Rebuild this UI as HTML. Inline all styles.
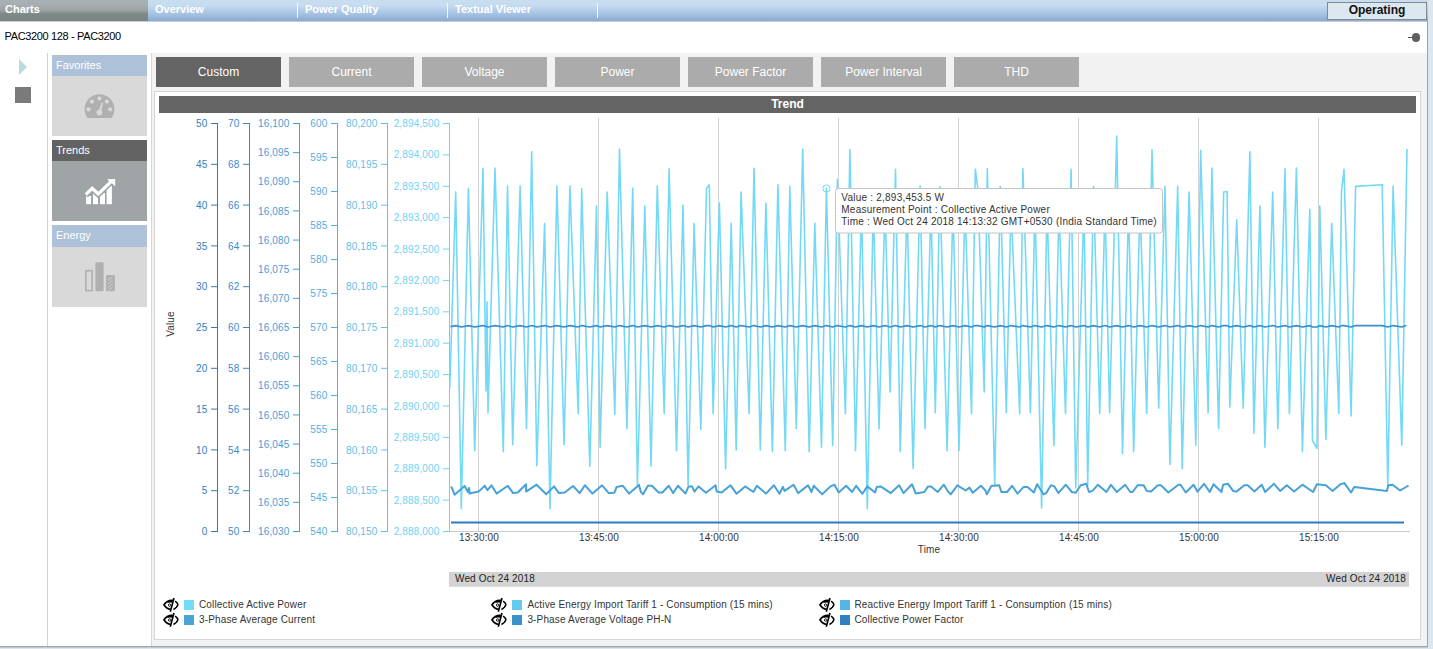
<!DOCTYPE html>
<html><head><meta charset="utf-8">
<style>
*{margin:0;padding:0;box-sizing:border-box}
html,body{width:1433px;height:649px;overflow:hidden;background:#dce6ef;font-family:"Liberation Sans",sans-serif}
.a{position:absolute}
#top{left:0;top:0;width:1428px;height:21px;background:linear-gradient(#c9ddf1 0,#c8dcf0 5px,#a9c6e5 13px,#89a9cf 21px)}
#charts{left:0;top:0;width:148px;height:21px;background:linear-gradient(#a8b2b5 0,#a6aeb1 5px,#9fa3a4 10px,#7d8a88 14px,#788583 21px)}
.tt{top:2px;color:#fff;font-weight:bold;font-size:11px;line-height:14px}
.sep{top:3px;width:1px;height:15px;background:#f4f8fc}
#oper{left:1327px;top:2px;width:100px;height:18px;background:#dce7f0;border:1px solid #7e8a96;font-weight:bold;font-size:12px;color:#111;text-align:center;line-height:15px}
#white{left:0;top:22px;width:1427px;height:624px;background:#fff}
#main{left:151px;top:53px;width:1277px;height:594px;background:#f2f2f2;border-left:1px solid #d6d6d6;border-right:1px solid #9ea3a8;border-bottom:1px solid #a0a4a8}
#nav{left:47px;top:53px;width:1px;height:593px;background:#d4d4d4}
.ph{left:52px;width:95px;height:20px;color:#fff;font-size:11px;line-height:20px;padding-left:4px}
.pb{left:52px;width:95px}
.tab{top:57px;width:125px;height:30px;background:#ababab;color:#fff;font-size:12px;line-height:30px;text-align:center}
#cbox{left:154px;top:91px;width:1267px;height:549px;background:#fff;border:1px solid #d6d6d6}
#trend{left:159px;top:96px;width:1257px;height:17px;background:#646464;color:#fff;font-weight:bold;font-size:12px;line-height:17px;text-align:center}
svg text{font-family:"Liberation Sans",sans-serif}
.ax{font-size:10px;letter-spacing:0.15px}
.tt2{font-size:10px;letter-spacing:0.225px}
</style></head><body>
<div class="a" id="top"></div>
<div class="a" style="left:0;top:21px;width:1427px;height:1px;background:#c8ccd0"></div>
<div class="a" id="charts"></div>
<div class="a tt" style="left:5px">Charts</div>
<div class="a tt" style="left:155px">Overview</div>
<div class="a sep" style="left:297px"></div>
<div class="a tt" style="left:305px">Power Quality</div>
<div class="a sep" style="left:447px"></div>
<div class="a tt" style="left:455px">Textual Viewer</div>
<div class="a sep" style="left:597px"></div>
<div class="a" id="oper">Operating</div>
<div class="a" id="white"></div>
<div class="a" style="left:1427px;top:21px;width:1px;height:626px;background:#a0a5aa"></div>
<div class="a" style="left:4.5px;top:30px;font-size:11px;color:#000;line-height:13px;letter-spacing:-0.35px">PAC3200 128 - PAC3200</div>
<!-- pin -->
<div class="a" style="left:1408px;top:37px;width:6px;height:1px;background:#555"></div>
<div class="a" style="left:1412px;top:33.4px;width:8.2px;height:8.2px;border-radius:50%;background:#5f5f5f"></div>
<div class="a" id="main"></div>
<div class="a" id="nav"></div>
<div class="a" style="left:0;top:646px;width:1428px;height:1px;background:#a0a4a8"></div>
<div class="a" style="left:0;top:647px;width:1428px;height:1px;background:#c3c8cd"></div>
<!-- nav icons -->
<div class="a" style="left:19px;top:59px;width:0;height:0;border-top:8px solid transparent;border-bottom:8px solid transparent;border-left:8px solid #bcd9e0"></div>
<div class="a" style="left:15px;top:87px;width:16px;height:16px;background:#7a7a7a"></div>
<!-- panels -->
<div class="a ph" style="top:55px;height:21px;background:#adc2d9">Favorites</div>
<div class="a pb" style="top:76px;height:60px;background:#d9d9d9"></div>
<div class="a ph" style="top:140px;height:21px;background:#636363">Trends</div>
<div class="a pb" style="top:161px;height:60px;background:#9fa4a6"></div>
<div class="a ph" style="top:225px;height:22px;background:#adc2d9">Energy</div>
<div class="a pb" style="top:247px;height:60px;background:#d9d9d9"></div>
<svg class="a" style="left:0;top:0" width="160" height="320">
<g fill="#b0b0b0">
<path d="M87.4 117.9 A14.9 14.9 0 1 1 111.6 117.9 Z"/>
</g>
<g fill="#d9d9d9">
<circle cx="99.4" cy="98.5" r="2.1"/><circle cx="91.9" cy="101.6" r="2.1"/><circle cx="106.9" cy="101.6" r="2.1"/>
<circle cx="88.6" cy="109.4" r="2.1"/><circle cx="110.2" cy="109.4" r="2.1"/><circle cx="99.4" cy="112.5" r="2.9"/>
<path d="M98.4 112 L101.6 102.5 L103.2 102.9 L100.6 112.5 Z"/>
</g>
<g fill="#fff">
<rect x="86.1" y="196" width="5" height="8.2"/><rect x="93" y="193" width="5" height="11.2"/>
<rect x="100" y="193" width="5" height="11.2"/><rect x="106.6" y="186" width="5.3" height="18.2"/>
</g>
<polyline points="85.5,195 92.2,188.3 98.3,194 112,180.5" fill="none" stroke="#9ea3a6" stroke-width="6.5" stroke-linejoin="miter"/>
<polyline points="85.8,194.6 92.2,188.3 98.3,194 111.5,181.2" fill="none" stroke="#fff" stroke-width="3.2" stroke-linejoin="miter"/>
<path d="M107 179.2 L115.2 178.9 L115.2 186.2 Z" fill="#fff"/>
<g fill="none" stroke="#b0b0b0">
<rect x="85.9" y="270.7" width="6.2" height="19.9" stroke-width="1.6"/>
</g>
<rect x="95.4" y="262.2" width="8.2" height="29.1" rx="0.8" fill="#b0b0b0"/>
<rect x="106.1" y="275.1" width="8.8" height="16.2" rx="0.8" fill="#b0b0b0"/>
<g stroke="#cfcfcf" stroke-width="1">
<line x1="108" y1="280.5" x2="112.5" y2="276.8"/><line x1="108" y1="284" x2="112.5" y2="280.3"/><line x1="108" y1="287.5" x2="112.5" y2="283.8"/><line x1="108.5" y1="290.5" x2="112.5" y2="287.3"/>
</g>
</svg>
<!-- tabs -->
<div class="a tab" style="left:156px;background:#646464">Custom</div>
<div class="a tab" style="left:289px">Current</div>
<div class="a tab" style="left:422px">Voltage</div>
<div class="a tab" style="left:555px">Power</div>
<div class="a tab" style="left:688px">Power Factor</div>
<div class="a tab" style="left:821px">Power Interval</div>
<div class="a tab" style="left:954px">THD</div>
<div class="a" id="cbox"></div>
<div class="a" id="trend">Trend</div>
<svg class="a" style="left:0;top:0" width="1433" height="649"><line x1="478.5" y1="118" x2="478.5" y2="531" stroke="#d3d3d3" stroke-width="1"/>
<line x1="598.5" y1="118" x2="598.5" y2="531" stroke="#d3d3d3" stroke-width="1"/>
<line x1="718.5" y1="118" x2="718.5" y2="531" stroke="#d3d3d3" stroke-width="1"/>
<line x1="838.5" y1="118" x2="838.5" y2="531" stroke="#d3d3d3" stroke-width="1"/>
<line x1="958.5" y1="118" x2="958.5" y2="531" stroke="#d3d3d3" stroke-width="1"/>
<line x1="1078.5" y1="118" x2="1078.5" y2="531" stroke="#d3d3d3" stroke-width="1"/>
<line x1="1198.5" y1="118" x2="1198.5" y2="531" stroke="#d3d3d3" stroke-width="1"/>
<line x1="1318.5" y1="118" x2="1318.5" y2="531" stroke="#d3d3d3" stroke-width="1"/>
<line x1="449" y1="531.5" x2="1410" y2="531.5" stroke="#cccccc" stroke-width="1"/>
<line x1="217.5" y1="123.5" x2="217.5" y2="532.0" stroke="#2d7dc0" stroke-width="1"/>
<line x1="211.0" y1="531.50" x2="218.0" y2="531.50" stroke="#2d7dc0" stroke-width="1"/>
<text x="207.5" y="535.10" fill="#2d7dc0" text-anchor="end" class="ax">0</text>
<line x1="211.0" y1="490.70" x2="218.0" y2="490.70" stroke="#2d7dc0" stroke-width="1"/>
<text x="207.5" y="494.30" fill="#2d7dc0" text-anchor="end" class="ax">5</text>
<line x1="211.0" y1="449.90" x2="218.0" y2="449.90" stroke="#2d7dc0" stroke-width="1"/>
<text x="207.5" y="453.50" fill="#2d7dc0" text-anchor="end" class="ax">10</text>
<line x1="211.0" y1="409.10" x2="218.0" y2="409.10" stroke="#2d7dc0" stroke-width="1"/>
<text x="207.5" y="412.70" fill="#2d7dc0" text-anchor="end" class="ax">15</text>
<line x1="211.0" y1="368.30" x2="218.0" y2="368.30" stroke="#2d7dc0" stroke-width="1"/>
<text x="207.5" y="371.90" fill="#2d7dc0" text-anchor="end" class="ax">20</text>
<line x1="211.0" y1="327.50" x2="218.0" y2="327.50" stroke="#2d7dc0" stroke-width="1"/>
<text x="207.5" y="331.10" fill="#2d7dc0" text-anchor="end" class="ax">25</text>
<line x1="211.0" y1="286.70" x2="218.0" y2="286.70" stroke="#2d7dc0" stroke-width="1"/>
<text x="207.5" y="290.30" fill="#2d7dc0" text-anchor="end" class="ax">30</text>
<line x1="211.0" y1="245.90" x2="218.0" y2="245.90" stroke="#2d7dc0" stroke-width="1"/>
<text x="207.5" y="249.50" fill="#2d7dc0" text-anchor="end" class="ax">35</text>
<line x1="211.0" y1="205.10" x2="218.0" y2="205.10" stroke="#2d7dc0" stroke-width="1"/>
<text x="207.5" y="208.70" fill="#2d7dc0" text-anchor="end" class="ax">40</text>
<line x1="211.0" y1="164.30" x2="218.0" y2="164.30" stroke="#2d7dc0" stroke-width="1"/>
<text x="207.5" y="167.90" fill="#2d7dc0" text-anchor="end" class="ax">45</text>
<line x1="211.0" y1="123.50" x2="218.0" y2="123.50" stroke="#2d7dc0" stroke-width="1"/>
<text x="207.5" y="127.10" fill="#2d7dc0" text-anchor="end" class="ax">50</text>
<line x1="249.5" y1="123.5" x2="249.5" y2="532.0" stroke="#3a8bcb" stroke-width="1"/>
<line x1="243.0" y1="531.50" x2="250.0" y2="531.50" stroke="#3a8bcb" stroke-width="1"/>
<text x="239.5" y="535.10" fill="#3a8bcb" text-anchor="end" class="ax">50</text>
<line x1="243.0" y1="490.70" x2="250.0" y2="490.70" stroke="#3a8bcb" stroke-width="1"/>
<text x="239.5" y="494.30" fill="#3a8bcb" text-anchor="end" class="ax">52</text>
<line x1="243.0" y1="449.90" x2="250.0" y2="449.90" stroke="#3a8bcb" stroke-width="1"/>
<text x="239.5" y="453.50" fill="#3a8bcb" text-anchor="end" class="ax">54</text>
<line x1="243.0" y1="409.10" x2="250.0" y2="409.10" stroke="#3a8bcb" stroke-width="1"/>
<text x="239.5" y="412.70" fill="#3a8bcb" text-anchor="end" class="ax">56</text>
<line x1="243.0" y1="368.30" x2="250.0" y2="368.30" stroke="#3a8bcb" stroke-width="1"/>
<text x="239.5" y="371.90" fill="#3a8bcb" text-anchor="end" class="ax">58</text>
<line x1="243.0" y1="327.50" x2="250.0" y2="327.50" stroke="#3a8bcb" stroke-width="1"/>
<text x="239.5" y="331.10" fill="#3a8bcb" text-anchor="end" class="ax">60</text>
<line x1="243.0" y1="286.70" x2="250.0" y2="286.70" stroke="#3a8bcb" stroke-width="1"/>
<text x="239.5" y="290.30" fill="#3a8bcb" text-anchor="end" class="ax">62</text>
<line x1="243.0" y1="245.90" x2="250.0" y2="245.90" stroke="#3a8bcb" stroke-width="1"/>
<text x="239.5" y="249.50" fill="#3a8bcb" text-anchor="end" class="ax">64</text>
<line x1="243.0" y1="205.10" x2="250.0" y2="205.10" stroke="#3a8bcb" stroke-width="1"/>
<text x="239.5" y="208.70" fill="#3a8bcb" text-anchor="end" class="ax">66</text>
<line x1="243.0" y1="164.30" x2="250.0" y2="164.30" stroke="#3a8bcb" stroke-width="1"/>
<text x="239.5" y="167.90" fill="#3a8bcb" text-anchor="end" class="ax">68</text>
<line x1="243.0" y1="123.50" x2="250.0" y2="123.50" stroke="#3a8bcb" stroke-width="1"/>
<text x="239.5" y="127.10" fill="#3a8bcb" text-anchor="end" class="ax">70</text>
<line x1="299.5" y1="123.5" x2="299.5" y2="532.0" stroke="#4a9cd5" stroke-width="1"/>
<line x1="293.0" y1="531.50" x2="300.0" y2="531.50" stroke="#4a9cd5" stroke-width="1"/>
<text x="289.5" y="535.10" fill="#4a9cd5" text-anchor="end" class="ax">16,030</text>
<line x1="293.0" y1="502.36" x2="300.0" y2="502.36" stroke="#4a9cd5" stroke-width="1"/>
<text x="289.5" y="505.96" fill="#4a9cd5" text-anchor="end" class="ax">16,035</text>
<line x1="293.0" y1="473.21" x2="300.0" y2="473.21" stroke="#4a9cd5" stroke-width="1"/>
<text x="289.5" y="476.81" fill="#4a9cd5" text-anchor="end" class="ax">16,040</text>
<line x1="293.0" y1="444.07" x2="300.0" y2="444.07" stroke="#4a9cd5" stroke-width="1"/>
<text x="289.5" y="447.67" fill="#4a9cd5" text-anchor="end" class="ax">16,045</text>
<line x1="293.0" y1="414.93" x2="300.0" y2="414.93" stroke="#4a9cd5" stroke-width="1"/>
<text x="289.5" y="418.53" fill="#4a9cd5" text-anchor="end" class="ax">16,050</text>
<line x1="293.0" y1="385.79" x2="300.0" y2="385.79" stroke="#4a9cd5" stroke-width="1"/>
<text x="289.5" y="389.39" fill="#4a9cd5" text-anchor="end" class="ax">16,055</text>
<line x1="293.0" y1="356.64" x2="300.0" y2="356.64" stroke="#4a9cd5" stroke-width="1"/>
<text x="289.5" y="360.24" fill="#4a9cd5" text-anchor="end" class="ax">16,060</text>
<line x1="293.0" y1="327.50" x2="300.0" y2="327.50" stroke="#4a9cd5" stroke-width="1"/>
<text x="289.5" y="331.10" fill="#4a9cd5" text-anchor="end" class="ax">16,065</text>
<line x1="293.0" y1="298.36" x2="300.0" y2="298.36" stroke="#4a9cd5" stroke-width="1"/>
<text x="289.5" y="301.96" fill="#4a9cd5" text-anchor="end" class="ax">16,070</text>
<line x1="293.0" y1="269.21" x2="300.0" y2="269.21" stroke="#4a9cd5" stroke-width="1"/>
<text x="289.5" y="272.81" fill="#4a9cd5" text-anchor="end" class="ax">16,075</text>
<line x1="293.0" y1="240.07" x2="300.0" y2="240.07" stroke="#4a9cd5" stroke-width="1"/>
<text x="289.5" y="243.67" fill="#4a9cd5" text-anchor="end" class="ax">16,080</text>
<line x1="293.0" y1="210.93" x2="300.0" y2="210.93" stroke="#4a9cd5" stroke-width="1"/>
<text x="289.5" y="214.53" fill="#4a9cd5" text-anchor="end" class="ax">16,085</text>
<line x1="293.0" y1="181.79" x2="300.0" y2="181.79" stroke="#4a9cd5" stroke-width="1"/>
<text x="289.5" y="185.39" fill="#4a9cd5" text-anchor="end" class="ax">16,090</text>
<line x1="293.0" y1="152.64" x2="300.0" y2="152.64" stroke="#4a9cd5" stroke-width="1"/>
<text x="289.5" y="156.24" fill="#4a9cd5" text-anchor="end" class="ax">16,095</text>
<line x1="293.0" y1="123.50" x2="300.0" y2="123.50" stroke="#4a9cd5" stroke-width="1"/>
<text x="289.5" y="127.10" fill="#4a9cd5" text-anchor="end" class="ax">16,100</text>
<line x1="337.5" y1="123.5" x2="337.5" y2="532.0" stroke="#53aedf" stroke-width="1"/>
<line x1="331.0" y1="531.50" x2="338.0" y2="531.50" stroke="#53aedf" stroke-width="1"/>
<text x="327.5" y="535.10" fill="#53aedf" text-anchor="end" class="ax">540</text>
<line x1="331.0" y1="497.50" x2="338.0" y2="497.50" stroke="#53aedf" stroke-width="1"/>
<text x="327.5" y="501.10" fill="#53aedf" text-anchor="end" class="ax">545</text>
<line x1="331.0" y1="463.50" x2="338.0" y2="463.50" stroke="#53aedf" stroke-width="1"/>
<text x="327.5" y="467.10" fill="#53aedf" text-anchor="end" class="ax">550</text>
<line x1="331.0" y1="429.50" x2="338.0" y2="429.50" stroke="#53aedf" stroke-width="1"/>
<text x="327.5" y="433.10" fill="#53aedf" text-anchor="end" class="ax">555</text>
<line x1="331.0" y1="395.50" x2="338.0" y2="395.50" stroke="#53aedf" stroke-width="1"/>
<text x="327.5" y="399.10" fill="#53aedf" text-anchor="end" class="ax">560</text>
<line x1="331.0" y1="361.50" x2="338.0" y2="361.50" stroke="#53aedf" stroke-width="1"/>
<text x="327.5" y="365.10" fill="#53aedf" text-anchor="end" class="ax">565</text>
<line x1="331.0" y1="327.50" x2="338.0" y2="327.50" stroke="#53aedf" stroke-width="1"/>
<text x="327.5" y="331.10" fill="#53aedf" text-anchor="end" class="ax">570</text>
<line x1="331.0" y1="293.50" x2="338.0" y2="293.50" stroke="#53aedf" stroke-width="1"/>
<text x="327.5" y="297.10" fill="#53aedf" text-anchor="end" class="ax">575</text>
<line x1="331.0" y1="259.50" x2="338.0" y2="259.50" stroke="#53aedf" stroke-width="1"/>
<text x="327.5" y="263.10" fill="#53aedf" text-anchor="end" class="ax">580</text>
<line x1="331.0" y1="225.50" x2="338.0" y2="225.50" stroke="#53aedf" stroke-width="1"/>
<text x="327.5" y="229.10" fill="#53aedf" text-anchor="end" class="ax">585</text>
<line x1="331.0" y1="191.50" x2="338.0" y2="191.50" stroke="#53aedf" stroke-width="1"/>
<text x="327.5" y="195.10" fill="#53aedf" text-anchor="end" class="ax">590</text>
<line x1="331.0" y1="157.50" x2="338.0" y2="157.50" stroke="#53aedf" stroke-width="1"/>
<text x="327.5" y="161.10" fill="#53aedf" text-anchor="end" class="ax">595</text>
<line x1="331.0" y1="123.50" x2="338.0" y2="123.50" stroke="#53aedf" stroke-width="1"/>
<text x="327.5" y="127.10" fill="#53aedf" text-anchor="end" class="ax">600</text>
<line x1="387.5" y1="123.5" x2="387.5" y2="532.0" stroke="#5fc0ea" stroke-width="1"/>
<line x1="381.0" y1="531.50" x2="388.0" y2="531.50" stroke="#5fc0ea" stroke-width="1"/>
<text x="377.5" y="535.10" fill="#5fc0ea" text-anchor="end" class="ax">80,150</text>
<line x1="381.0" y1="490.70" x2="388.0" y2="490.70" stroke="#5fc0ea" stroke-width="1"/>
<text x="377.5" y="494.30" fill="#5fc0ea" text-anchor="end" class="ax">80,155</text>
<line x1="381.0" y1="449.90" x2="388.0" y2="449.90" stroke="#5fc0ea" stroke-width="1"/>
<text x="377.5" y="453.50" fill="#5fc0ea" text-anchor="end" class="ax">80,160</text>
<line x1="381.0" y1="409.10" x2="388.0" y2="409.10" stroke="#5fc0ea" stroke-width="1"/>
<text x="377.5" y="412.70" fill="#5fc0ea" text-anchor="end" class="ax">80,165</text>
<line x1="381.0" y1="368.30" x2="388.0" y2="368.30" stroke="#5fc0ea" stroke-width="1"/>
<text x="377.5" y="371.90" fill="#5fc0ea" text-anchor="end" class="ax">80,170</text>
<line x1="381.0" y1="327.50" x2="388.0" y2="327.50" stroke="#5fc0ea" stroke-width="1"/>
<text x="377.5" y="331.10" fill="#5fc0ea" text-anchor="end" class="ax">80,175</text>
<line x1="381.0" y1="286.70" x2="388.0" y2="286.70" stroke="#5fc0ea" stroke-width="1"/>
<text x="377.5" y="290.30" fill="#5fc0ea" text-anchor="end" class="ax">80,180</text>
<line x1="381.0" y1="245.90" x2="388.0" y2="245.90" stroke="#5fc0ea" stroke-width="1"/>
<text x="377.5" y="249.50" fill="#5fc0ea" text-anchor="end" class="ax">80,185</text>
<line x1="381.0" y1="205.10" x2="388.0" y2="205.10" stroke="#5fc0ea" stroke-width="1"/>
<text x="377.5" y="208.70" fill="#5fc0ea" text-anchor="end" class="ax">80,190</text>
<line x1="381.0" y1="164.30" x2="388.0" y2="164.30" stroke="#5fc0ea" stroke-width="1"/>
<text x="377.5" y="167.90" fill="#5fc0ea" text-anchor="end" class="ax">80,195</text>
<line x1="381.0" y1="123.50" x2="388.0" y2="123.50" stroke="#5fc0ea" stroke-width="1"/>
<text x="377.5" y="127.10" fill="#5fc0ea" text-anchor="end" class="ax">80,200</text>
<line x1="449.5" y1="123.5" x2="449.5" y2="532.0" stroke="#6dd3f5" stroke-width="1"/>
<line x1="443.0" y1="531.50" x2="450.0" y2="531.50" stroke="#6dd3f5" stroke-width="1"/>
<text x="439.5" y="535.10" fill="#6dd3f5" text-anchor="end" class="ax">2,888,000</text>
<line x1="443.0" y1="500.12" x2="450.0" y2="500.12" stroke="#6dd3f5" stroke-width="1"/>
<text x="439.5" y="503.72" fill="#6dd3f5" text-anchor="end" class="ax">2,888,500</text>
<line x1="443.0" y1="468.73" x2="450.0" y2="468.73" stroke="#6dd3f5" stroke-width="1"/>
<text x="439.5" y="472.33" fill="#6dd3f5" text-anchor="end" class="ax">2,889,000</text>
<line x1="443.0" y1="437.35" x2="450.0" y2="437.35" stroke="#6dd3f5" stroke-width="1"/>
<text x="439.5" y="440.95" fill="#6dd3f5" text-anchor="end" class="ax">2,889,500</text>
<line x1="443.0" y1="405.96" x2="450.0" y2="405.96" stroke="#6dd3f5" stroke-width="1"/>
<text x="439.5" y="409.56" fill="#6dd3f5" text-anchor="end" class="ax">2,890,000</text>
<line x1="443.0" y1="374.58" x2="450.0" y2="374.58" stroke="#6dd3f5" stroke-width="1"/>
<text x="439.5" y="378.18" fill="#6dd3f5" text-anchor="end" class="ax">2,890,500</text>
<line x1="443.0" y1="343.19" x2="450.0" y2="343.19" stroke="#6dd3f5" stroke-width="1"/>
<text x="439.5" y="346.79" fill="#6dd3f5" text-anchor="end" class="ax">2,891,000</text>
<line x1="443.0" y1="311.81" x2="450.0" y2="311.81" stroke="#6dd3f5" stroke-width="1"/>
<text x="439.5" y="315.41" fill="#6dd3f5" text-anchor="end" class="ax">2,891,500</text>
<line x1="443.0" y1="280.42" x2="450.0" y2="280.42" stroke="#6dd3f5" stroke-width="1"/>
<text x="439.5" y="284.02" fill="#6dd3f5" text-anchor="end" class="ax">2,892,000</text>
<line x1="443.0" y1="249.04" x2="450.0" y2="249.04" stroke="#6dd3f5" stroke-width="1"/>
<text x="439.5" y="252.64" fill="#6dd3f5" text-anchor="end" class="ax">2,892,500</text>
<line x1="443.0" y1="217.65" x2="450.0" y2="217.65" stroke="#6dd3f5" stroke-width="1"/>
<text x="439.5" y="221.25" fill="#6dd3f5" text-anchor="end" class="ax">2,893,000</text>
<line x1="443.0" y1="186.27" x2="450.0" y2="186.27" stroke="#6dd3f5" stroke-width="1"/>
<text x="439.5" y="189.87" fill="#6dd3f5" text-anchor="end" class="ax">2,893,500</text>
<line x1="443.0" y1="154.88" x2="450.0" y2="154.88" stroke="#6dd3f5" stroke-width="1"/>
<text x="439.5" y="158.48" fill="#6dd3f5" text-anchor="end" class="ax">2,894,000</text>
<line x1="443.0" y1="123.50" x2="450.0" y2="123.50" stroke="#6dd3f5" stroke-width="1"/>
<text x="439.5" y="127.10" fill="#6dd3f5" text-anchor="end" class="ax">2,894,500</text>
<text x="479" y="541" fill="#333" text-anchor="middle" class="ax">13:30:00</text>
<text x="599" y="541" fill="#333" text-anchor="middle" class="ax">13:45:00</text>
<text x="719" y="541" fill="#333" text-anchor="middle" class="ax">14:00:00</text>
<text x="839" y="541" fill="#333" text-anchor="middle" class="ax">14:15:00</text>
<text x="959" y="541" fill="#333" text-anchor="middle" class="ax">14:30:00</text>
<text x="1079" y="541" fill="#333" text-anchor="middle" class="ax">14:45:00</text>
<text x="1199" y="541" fill="#333" text-anchor="middle" class="ax">15:00:00</text>
<text x="1319" y="541" fill="#333" text-anchor="middle" class="ax">15:15:00</text>
<text x="929" y="553" fill="#333" text-anchor="middle" class="ax">Time</text>
<text transform="translate(174,324) rotate(-90)" fill="#333" text-anchor="middle" class="ax">Value</text>
<polyline points="449.8,388.0 455.7,192.0 461.3,508.8 468.4,188.4 474.7,450.7 483.0,168.3 486.0,391.0 487.0,302.0 488.0,412.7 495.0,168.0 503.3,451.8 507.5,186.1 512.7,444.7 520.1,186.1 526.5,428.8 531.7,151.7 536.8,465.7 544.6,223.5 550.0,508.8 556.9,186.1 564.1,444.7 569.9,186.1 578.2,413.8 581.7,188.6 589.8,466.3 596.5,206.0 600.1,447.3 607.2,192.0 614.8,414.3 619.5,149.1 626.9,428.8 632.7,188.2 637.4,485.3 644.8,206.0 651.0,466.3 657.3,186.1 664.2,413.4 669.1,168.9 676.5,450.7 683.0,205.4 688.1,485.3 694.1,223.2 700.8,429.5 706.5,188.2 709.3,184.8 713.1,413.4 719.4,203.1 725.6,469.0 731.2,223.2 736.2,450.0 741.1,192.0 749.1,413.4 754.0,168.3 760.3,450.0 765.9,203.1 772.4,451.8 777.9,184.8 785.3,450.7 789.8,186.4 796.3,428.8 802.7,149.1 809.2,451.8 814.8,223.2 821.5,447.3 826.4,188.2 832.7,445.5 837.4,179.2 845.4,413.8 849.9,149.5 855.5,450.7 861.5,205.0 867.3,508.8 873.3,205.0 879.0,428.8 885.0,205.0 890.1,391.9 895.5,169.2 900.2,451.8 907.0,205.0 913.1,468.6 920.1,185.9 925.0,428.8 931.0,205.0 935.3,412.7 939.9,186.6 947.1,450.7 953.0,205.0 959.0,450.7 965.0,205.0 971.5,413.8 975.3,169.2 977.9,189.0 984.2,391.9 987.3,168.6 994.7,485.3 1000.3,186.4 1006.3,412.7 1011.0,205.0 1019.7,413.8 1022.9,168.5 1030.4,412.7 1035.0,205.0 1041.6,508.1 1047.0,205.0 1053.9,445.5 1059.0,205.0 1065.5,413.8 1071.1,169.2 1075.7,487.8 1084.0,205.0 1087.7,485.0 1093.5,186.4 1099.7,413.4 1105.0,205.0 1109.6,412.7 1116.7,136.1 1122.5,453.4 1128.6,205.0 1133.7,451.8 1140.0,205.0 1146.7,413.4 1152.0,149.5 1158.7,408.2 1165.0,186.4 1169.9,464.5 1177.7,186.4 1182.2,468.6 1189.1,192.0 1195.8,445.1 1200.7,150.2 1208.1,412.7 1211.9,168.0 1218.6,428.8 1223.7,192.0 1227.1,191.5 1229.8,407.1 1236.7,219.9 1243.2,408.2 1249.9,151.7 1253.9,433.3 1259.9,206.0 1264.9,447.3 1272.7,192.0 1277.8,428.8 1285.0,168.7 1289.4,413.4 1296.4,168.0 1302.4,451.8 1309.8,209.4 1312.5,440.6 1317.0,448.5 1319.8,206.0 1325.9,439.5 1331.7,223.2 1338.8,413.4 1341.5,191.5 1344.0,169.2 1351.1,416.0 1355.6,186.4 1382.2,184.8 1387.8,486.4 1393.1,186.4 1401.8,445.5 1407.0,149.0" fill="none" stroke="#74d9f7" stroke-width="1.6" stroke-linejoin="round"/>
<polyline points="450.5,326.6 455.7,325.6 461.3,327.0 468.4,325.6 474.7,327.0 483.0,325.6 488.0,327.0 495.0,325.6 503.3,327.0 507.5,325.6 512.7,327.0 520.1,325.6 526.5,327.0 531.7,325.6 536.8,327.0 544.6,325.6 550.0,327.0 556.9,325.6 564.1,327.0 569.9,325.6 578.2,327.0 581.7,325.6 589.8,327.0 596.5,325.6 600.1,327.0 607.2,325.6 614.8,327.0 619.5,325.6 626.9,327.0 632.7,325.6 637.4,327.0 644.8,325.6 651.0,327.0 657.3,325.6 664.2,327.0 669.1,325.6 676.5,327.0 683.0,325.6 688.1,327.0 694.1,325.6 700.8,327.0 706.5,325.6 709.3,325.6 713.1,327.0 719.4,325.6 725.6,327.0 731.2,325.6 736.2,327.0 741.1,325.6 749.1,327.0 754.0,325.6 760.3,327.0 765.9,325.6 772.4,327.0 777.9,325.6 785.3,327.0 789.8,325.6 796.3,327.0 802.7,325.6 809.2,327.0 814.8,325.6 821.5,327.0 826.4,325.6 832.7,327.0 837.4,325.6 845.4,327.0 849.9,325.6 855.5,327.0 861.5,325.6 867.3,327.0 873.3,325.6 879.0,327.0 885.0,325.6 890.1,327.0 895.5,325.6 900.2,327.0 907.0,325.6 913.1,327.0 920.1,325.6 925.0,327.0 931.0,325.6 935.3,327.0 939.9,325.6 947.1,327.0 953.0,325.6 959.0,327.0 965.0,325.6 971.5,327.0 975.3,325.6 977.9,325.6 984.2,327.0 987.3,325.6 994.7,327.0 1000.3,325.6 1006.3,327.0 1011.0,325.6 1019.7,327.0 1022.9,325.6 1030.4,327.0 1035.0,325.6 1041.6,327.0 1047.0,325.6 1053.9,327.0 1059.0,325.6 1065.5,327.0 1071.1,325.6 1075.7,327.0 1084.0,325.6 1087.7,327.0 1093.5,325.6 1099.7,327.0 1105.0,325.6 1109.6,327.0 1116.7,325.6 1122.5,327.0 1128.6,325.6 1133.7,327.0 1140.0,325.6 1146.7,327.0 1152.0,325.6 1158.7,327.0 1165.0,325.6 1169.9,327.0 1177.7,325.6 1182.2,327.0 1189.1,325.6 1195.8,327.0 1200.7,325.6 1208.1,327.0 1211.9,325.6 1218.6,327.0 1223.7,325.6 1227.1,325.6 1229.8,327.0 1236.7,325.6 1243.2,327.0 1249.9,325.6 1253.9,327.0 1259.9,325.6 1264.9,327.0 1272.7,325.6 1277.8,327.0 1285.0,325.6 1289.4,327.0 1296.4,325.6 1302.4,327.0 1309.8,325.6 1312.5,327.0 1317.0,327.0 1319.8,325.6 1325.9,327.0 1331.7,325.6 1338.8,327.0 1341.5,325.6 1344.0,325.6 1351.1,327.0 1355.6,325.6 1382.2,325.6 1387.8,327.0 1393.1,325.6 1401.8,327.0 1406.3,325.6" fill="none" stroke="#3d8dca" stroke-width="1.6" stroke-linejoin="round"/>
<polyline points="451.2,486.4 454.6,494.7 464.6,486.0 468.0,492.0 469.1,488.0 469.6,493.6 478.7,491.6 484.8,485.8 487.4,490.2 491.5,485.3 496.6,493.6 507.8,485.8 513.1,493.1 517.8,492.5 526.1,484.2 526.1,491.6 536.6,484.7 546.2,494.3 554.0,486.4 559.0,493.1 564.8,492.5 573.0,486.0 579.7,493.1 584.9,485.3 592.5,493.6 602.1,485.3 608.8,493.1 614.4,492.7 616.6,486.9 622.9,485.8 629.1,493.6 639.0,484.9 640.7,491.6 643.0,494.3 647.9,485.8 651.9,485.8 658.6,492.5 662.4,492.5 668.7,485.8 673.1,493.1 678.0,485.8 685.4,493.6 688.6,486.4 692.1,486.4 694.4,491.6 698.6,486.4 706.0,492.7 715.6,485.3 716.7,491.6 721.6,492.5 730.6,485.3 736.6,493.8 745.1,486.4 753.4,492.0 756.9,485.8 765.9,493.6 773.9,485.3 779.5,493.8 782.9,486.9 784.6,490.9 793.6,484.7 798.1,493.1 808.1,485.3 811.5,492.0 813.7,485.8 822.2,494.3 830.5,486.4 834.5,484.7 838.7,492.5 846.1,485.8 852.1,492.0 856.2,485.8 862.4,493.8 867.3,486.4 875.1,492.5 876.7,486.9 880.7,486.4 890.8,493.1 899.1,485.3 903.5,493.1 912.0,484.2 915.8,493.6 924.3,492.0 928.1,486.4 931.0,486.4 937.7,492.0 943.8,484.7 948.4,492.0 950.7,494.3 957.4,485.3 965.6,490.5 969.4,487.6 972.8,492.7 980.8,485.8 985.3,490.2 986.9,494.3 991.3,486.0 999.2,485.3 1001.4,492.0 1007.0,492.0 1012.1,485.8 1017.5,493.6 1023.7,486.9 1027.5,486.9 1033.8,492.5 1037.2,484.2 1043.4,494.3 1046.1,493.1 1051.0,485.3 1054.4,486.4 1058.4,493.1 1065.8,484.7 1071.8,492.0 1075.8,492.7 1080.7,485.3 1086.3,483.8 1089.0,492.0 1092.4,490.9 1097.9,484.7 1106.4,492.0 1110.9,484.9 1116.9,492.0 1125.2,484.7 1130.3,492.0 1132.6,492.0 1137.5,485.3 1143.7,485.3 1146.7,490.9 1151.1,491.6 1157.8,485.3 1161.0,485.3 1168.3,492.5 1178.4,484.7 1180.6,484.7 1185.8,492.5 1193.6,484.7 1197.4,491.6 1204.1,483.8 1209.7,492.0 1213.5,484.2 1221.5,492.0 1223.1,484.7 1228.0,483.8 1233.1,490.9 1236.5,491.6 1244.3,485.3 1247.7,485.3 1254.4,491.4 1261.7,484.7 1265.1,492.0 1274.0,483.8 1280.1,490.9 1286.8,485.3 1294.1,491.6 1302.4,484.7 1313.1,492.0 1316.9,484.2 1325.9,485.3 1332.6,490.9 1340.4,484.2 1344.4,483.1 1351.1,492.5 1354.2,486.9 1386.9,490.9 1388.4,485.3 1392.5,484.7 1400.1,490.5 1408.6,485.5" fill="none" stroke="#48a2d8" stroke-width="2" stroke-linejoin="round"/>
<line x1="451" y1="522.5" x2="1404" y2="522.5" stroke="#2d7dc0" stroke-width="2"/>
<circle cx="826.4" cy="188.5" r="3.6" fill="none" stroke="#74d9f7" stroke-width="1"/>
<rect x="835.5" y="188.5" width="327" height="44.5" rx="3" ry="3" fill="#fff" stroke="#c4c4c4" stroke-width="1"/>
<text x="841.3" y="201" fill="#333" class="tt2">Value : 2,893,453.5 W</text>
<text x="841.3" y="213" fill="#333" class="tt2">Measurement Point : Collective Active Power</text>
<text x="841.3" y="225" fill="#333" class="tt2">Time : Wed Oct 24 2018 14:13:32 GMT+0530 (India Standard Time)</text>
<rect x="449" y="572" width="960" height="14.8" fill="#d3d3d3"/>
<text x="455" y="582.4" fill="#222" class="ax">Wed Oct 24 2018</text>
<text x="1406" y="582.4" fill="#222" text-anchor="end" class="ax">Wed Oct 24 2018</text>
<g transform="translate(161,596)"><path d="M11.8 4.4 C8.0 4.0 4.8 6.0 3.0 8.8 C4.6 11.4 7.0 13.1 9.6 13.5" stroke="#000" stroke-width="1.7" fill="none"/><path d="M6.2 5.4 C7.7 4.6 9.6 4.2 12.0 4.3 L11.4 6.9 C9.9 6.2 7.9 6.3 6.6 7.0 Z" fill="#000"/><circle cx="8.6" cy="9.1" r="1.2" stroke="#000" stroke-width="0.9" fill="none"/><path d="M13.0 2.0 L9.3 15.8" stroke="#000" stroke-width="1.6"/><path d="M14.2 5.2 C15.6 6.3 16.9 7.8 16.9 8.7 C16.6 10.3 15.0 12.0 12.5 13.5" stroke="#000" stroke-width="1.5" fill="none"/></g>
<rect x="184" y="600" width="10" height="10" fill="#72dcf8"/>
<text x="199" y="608" fill="#333" class="ax">Collective Active Power</text>
<g transform="translate(161,611)"><path d="M11.8 4.4 C8.0 4.0 4.8 6.0 3.0 8.8 C4.6 11.4 7.0 13.1 9.6 13.5" stroke="#000" stroke-width="1.7" fill="none"/><path d="M6.2 5.4 C7.7 4.6 9.6 4.2 12.0 4.3 L11.4 6.9 C9.9 6.2 7.9 6.3 6.6 7.0 Z" fill="#000"/><circle cx="8.6" cy="9.1" r="1.2" stroke="#000" stroke-width="0.9" fill="none"/><path d="M13.0 2.0 L9.3 15.8" stroke="#000" stroke-width="1.6"/><path d="M14.2 5.2 C15.6 6.3 16.9 7.8 16.9 8.7 C16.6 10.3 15.0 12.0 12.5 13.5" stroke="#000" stroke-width="1.5" fill="none"/></g>
<rect x="184" y="615" width="10" height="10" fill="#4aa3d5"/>
<text x="199" y="623" fill="#333" class="ax">3-Phase Average Current</text>
<g transform="translate(489,596)"><path d="M11.8 4.4 C8.0 4.0 4.8 6.0 3.0 8.8 C4.6 11.4 7.0 13.1 9.6 13.5" stroke="#000" stroke-width="1.7" fill="none"/><path d="M6.2 5.4 C7.7 4.6 9.6 4.2 12.0 4.3 L11.4 6.9 C9.9 6.2 7.9 6.3 6.6 7.0 Z" fill="#000"/><circle cx="8.6" cy="9.1" r="1.2" stroke="#000" stroke-width="0.9" fill="none"/><path d="M13.0 2.0 L9.3 15.8" stroke="#000" stroke-width="1.6"/><path d="M14.2 5.2 C15.6 6.3 16.9 7.8 16.9 8.7 C16.6 10.3 15.0 12.0 12.5 13.5" stroke="#000" stroke-width="1.5" fill="none"/></g>
<rect x="512" y="600" width="10" height="10" fill="#62caee"/>
<text x="527.4" y="608" fill="#333" class="ax">Active Energy Import Tariff 1 - Consumption (15 mins)</text>
<g transform="translate(489,611)"><path d="M11.8 4.4 C8.0 4.0 4.8 6.0 3.0 8.8 C4.6 11.4 7.0 13.1 9.6 13.5" stroke="#000" stroke-width="1.7" fill="none"/><path d="M6.2 5.4 C7.7 4.6 9.6 4.2 12.0 4.3 L11.4 6.9 C9.9 6.2 7.9 6.3 6.6 7.0 Z" fill="#000"/><circle cx="8.6" cy="9.1" r="1.2" stroke="#000" stroke-width="0.9" fill="none"/><path d="M13.0 2.0 L9.3 15.8" stroke="#000" stroke-width="1.6"/><path d="M14.2 5.2 C15.6 6.3 16.9 7.8 16.9 8.7 C16.6 10.3 15.0 12.0 12.5 13.5" stroke="#000" stroke-width="1.5" fill="none"/></g>
<rect x="512" y="615" width="10" height="10" fill="#3a90c8"/>
<text x="527.4" y="623" fill="#333" class="ax">3-Phase Average Voltage PH-N</text>
<g transform="translate(817,596)"><path d="M11.8 4.4 C8.0 4.0 4.8 6.0 3.0 8.8 C4.6 11.4 7.0 13.1 9.6 13.5" stroke="#000" stroke-width="1.7" fill="none"/><path d="M6.2 5.4 C7.7 4.6 9.6 4.2 12.0 4.3 L11.4 6.9 C9.9 6.2 7.9 6.3 6.6 7.0 Z" fill="#000"/><circle cx="8.6" cy="9.1" r="1.2" stroke="#000" stroke-width="0.9" fill="none"/><path d="M13.0 2.0 L9.3 15.8" stroke="#000" stroke-width="1.6"/><path d="M14.2 5.2 C15.6 6.3 16.9 7.8 16.9 8.7 C16.6 10.3 15.0 12.0 12.5 13.5" stroke="#000" stroke-width="1.5" fill="none"/></g>
<rect x="840" y="600" width="10" height="10" fill="#55b6e3"/>
<text x="854.5" y="608" fill="#333" class="ax">Reactive Energy Import Tariff 1 - Consumption (15 mins)</text>
<g transform="translate(817,611)"><path d="M11.8 4.4 C8.0 4.0 4.8 6.0 3.0 8.8 C4.6 11.4 7.0 13.1 9.6 13.5" stroke="#000" stroke-width="1.7" fill="none"/><path d="M6.2 5.4 C7.7 4.6 9.6 4.2 12.0 4.3 L11.4 6.9 C9.9 6.2 7.9 6.3 6.6 7.0 Z" fill="#000"/><circle cx="8.6" cy="9.1" r="1.2" stroke="#000" stroke-width="0.9" fill="none"/><path d="M13.0 2.0 L9.3 15.8" stroke="#000" stroke-width="1.6"/><path d="M14.2 5.2 C15.6 6.3 16.9 7.8 16.9 8.7 C16.6 10.3 15.0 12.0 12.5 13.5" stroke="#000" stroke-width="1.5" fill="none"/></g>
<rect x="840" y="615" width="10" height="10" fill="#2f80c3"/>
<text x="854.5" y="623" fill="#333" class="ax">Collective Power Factor</text></svg>
</body></html>
